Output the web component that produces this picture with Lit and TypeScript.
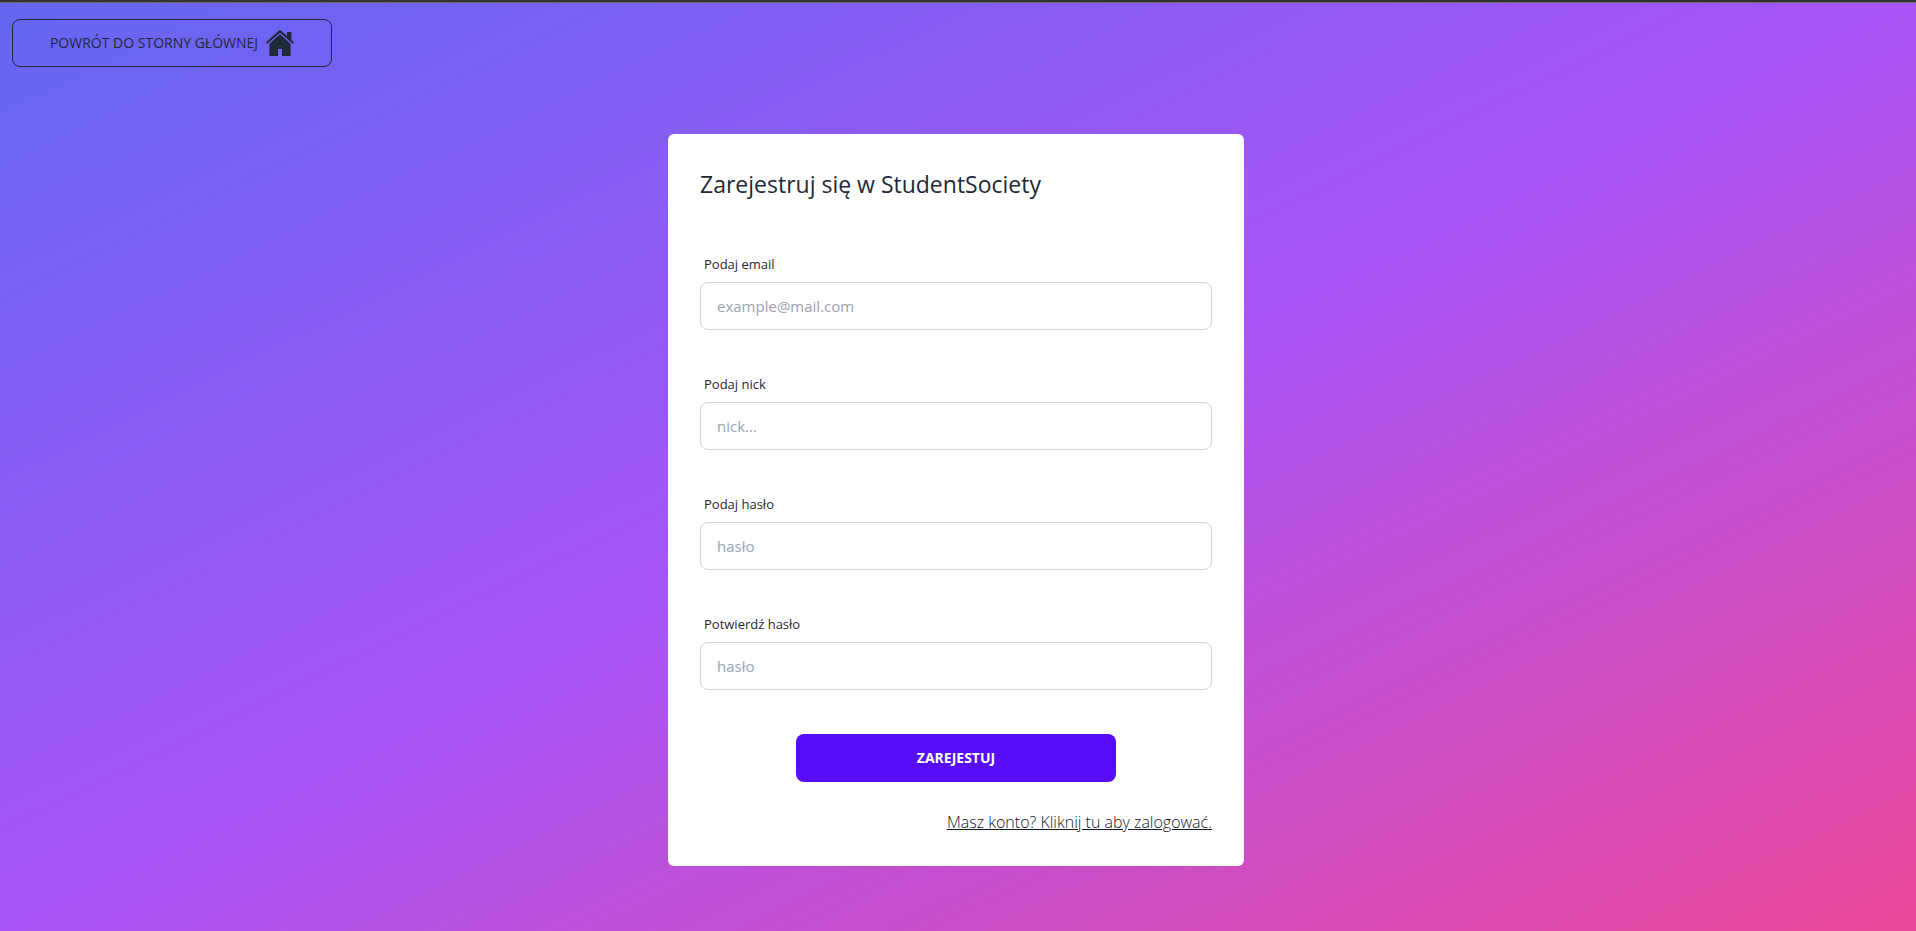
import { LitElement, html, css } from "lit";
import { customElement } from "lit/decorators.js";

interface Field {
  id: string;
  label: string;
  type: string;
  placeholder: string;
}

const FIELDS: Field[] = [
  { id: "email", label: "Podaj email", type: "email", placeholder: "example@mail.com" },
  { id: "nick", label: "Podaj nick", type: "text", placeholder: "nick..." },
  { id: "password", label: "Podaj hasło", type: "password", placeholder: "hasło" },
  { id: "confirm", label: "Potwierdź hasło", type: "password", placeholder: "hasło" },
];

@customElement("app-root")
export class AppRoot extends LitElement {
  static styles = css`
    :host {
      display: flex;
      flex-direction: column;
      box-sizing: border-box;
      min-height: 100vh;
      color: #1f2937;
      font-family: "Segoe UI", "Open Sans", "Noto Sans", sans-serif;
      font-size: 16px;
      line-height: 24px;
      background: linear-gradient(to bottom right, #6366f1, #a855f7, #ec4899);
    }
    * {
      box-sizing: border-box;
    }
    .strip {
      height: 3px;
      background: #333333;
      border-bottom: 1px solid #6b6b6b;
    }
    .top {
      padding: 16px 12px;
    }
    .button {
      display: flex;
      align-items: center;
      justify-content: center;
      gap: 8px;
      width: 320px;
      max-width: 100%;
      height: 48px;
      padding: 0 16px;
      border: 1px solid transparent;
      border-radius: 8px;
      font: inherit;
      font-size: 14px;
      line-height: 20px;
      text-transform: uppercase;
      cursor: pointer;
    }
    .outline {
      border-color: #1f2937;
      background: transparent;
      color: #1f2937;
      font-weight: 400;
    }
    .primary {
      align-self: center;
      margin: 8px 0 28px;
      background: #570df8;
      color: #ffffff;
      font-weight: 700;
    }
    .icon {
      width: 28px;
      height: 28px;
      flex: none;
    }
    .main {
      display: flex;
      justify-content: center;
      padding: 51px 16px 64px 12px;
    }
    .card {
      display: flex;
      flex-direction: column;
      width: 100%;
      max-width: 576px;
      padding: 32px;
      border-radius: 6px;
      background: #ffffff;
    }
    .title {
      margin: 0 0 44px;
      font-size: 23px;
      font-weight: 400;
      line-height: 36px;
    }
    .field {
      display: flex;
      flex-direction: column;
      margin-bottom: 36px;
    }
    .label {
      padding: 8px 4px;
      font-size: 13px;
      line-height: 20px;
    }
    .input {
      width: 100%;
      height: 48px;
      padding: 0 16px;
      border: 1px solid #d2d4d7;
      border-radius: 8px;
      background: #ffffff;
      color: inherit;
      font: inherit;
      font-size: 15px;
    }
    .input::placeholder {
      color: #9ca3af;
      opacity: 1;
    }
    .login {
      align-self: flex-end;
      color: #111827;
      font-weight: 300;
      text-decoration: underline;
    }
  `;

  render() {
    return html`
      <div class="strip"></div>
      <header class="top">
        <button class="button outline" type="button">
          Powrót do storny głównej
          <svg class="icon" viewBox="0 0 28 28" fill="currentColor" aria-hidden="true">
            <path d="M14 5.2 24.6 14.8V26q0 1-1 1H16V20H12v7H4.4q-1 0-1-1V14.8Z" />
            <path d="M13 1.500q1-.9 2 0L21 6.900V3.600q0-.6.600-.6h3.200q.6 0 .6.600V10.900L27.700 13q.6.600.1 1.200-.6.700-1.300.2L14 3.800 1.500 14.400Q.8 14.900.2 14.200-.3 13.600.3 13Z" />
          </svg>
        </button>
      </header>
      <main class="main">
        <form class="card" @submit=${(e: Event) => e.preventDefault()}>
          <h1 class="title">Zarejestruj się w StudentSociety</h1>
          ${FIELDS.map(
            (f) => html`
              <div class="field">
                <label class="label" for=${f.id}>${f.label}</label>
                <input class="input" id=${f.id} name=${f.id} type=${f.type} placeholder=${f.placeholder} />
              </div>
            `
          )}
          <button class="button primary" type="submit">Zarejestuj</button>
          <a class="login" href="#login">Masz konto? Kliknij tu aby zalogować.</a>
        </form>
      </main>
    `;
  }
}
